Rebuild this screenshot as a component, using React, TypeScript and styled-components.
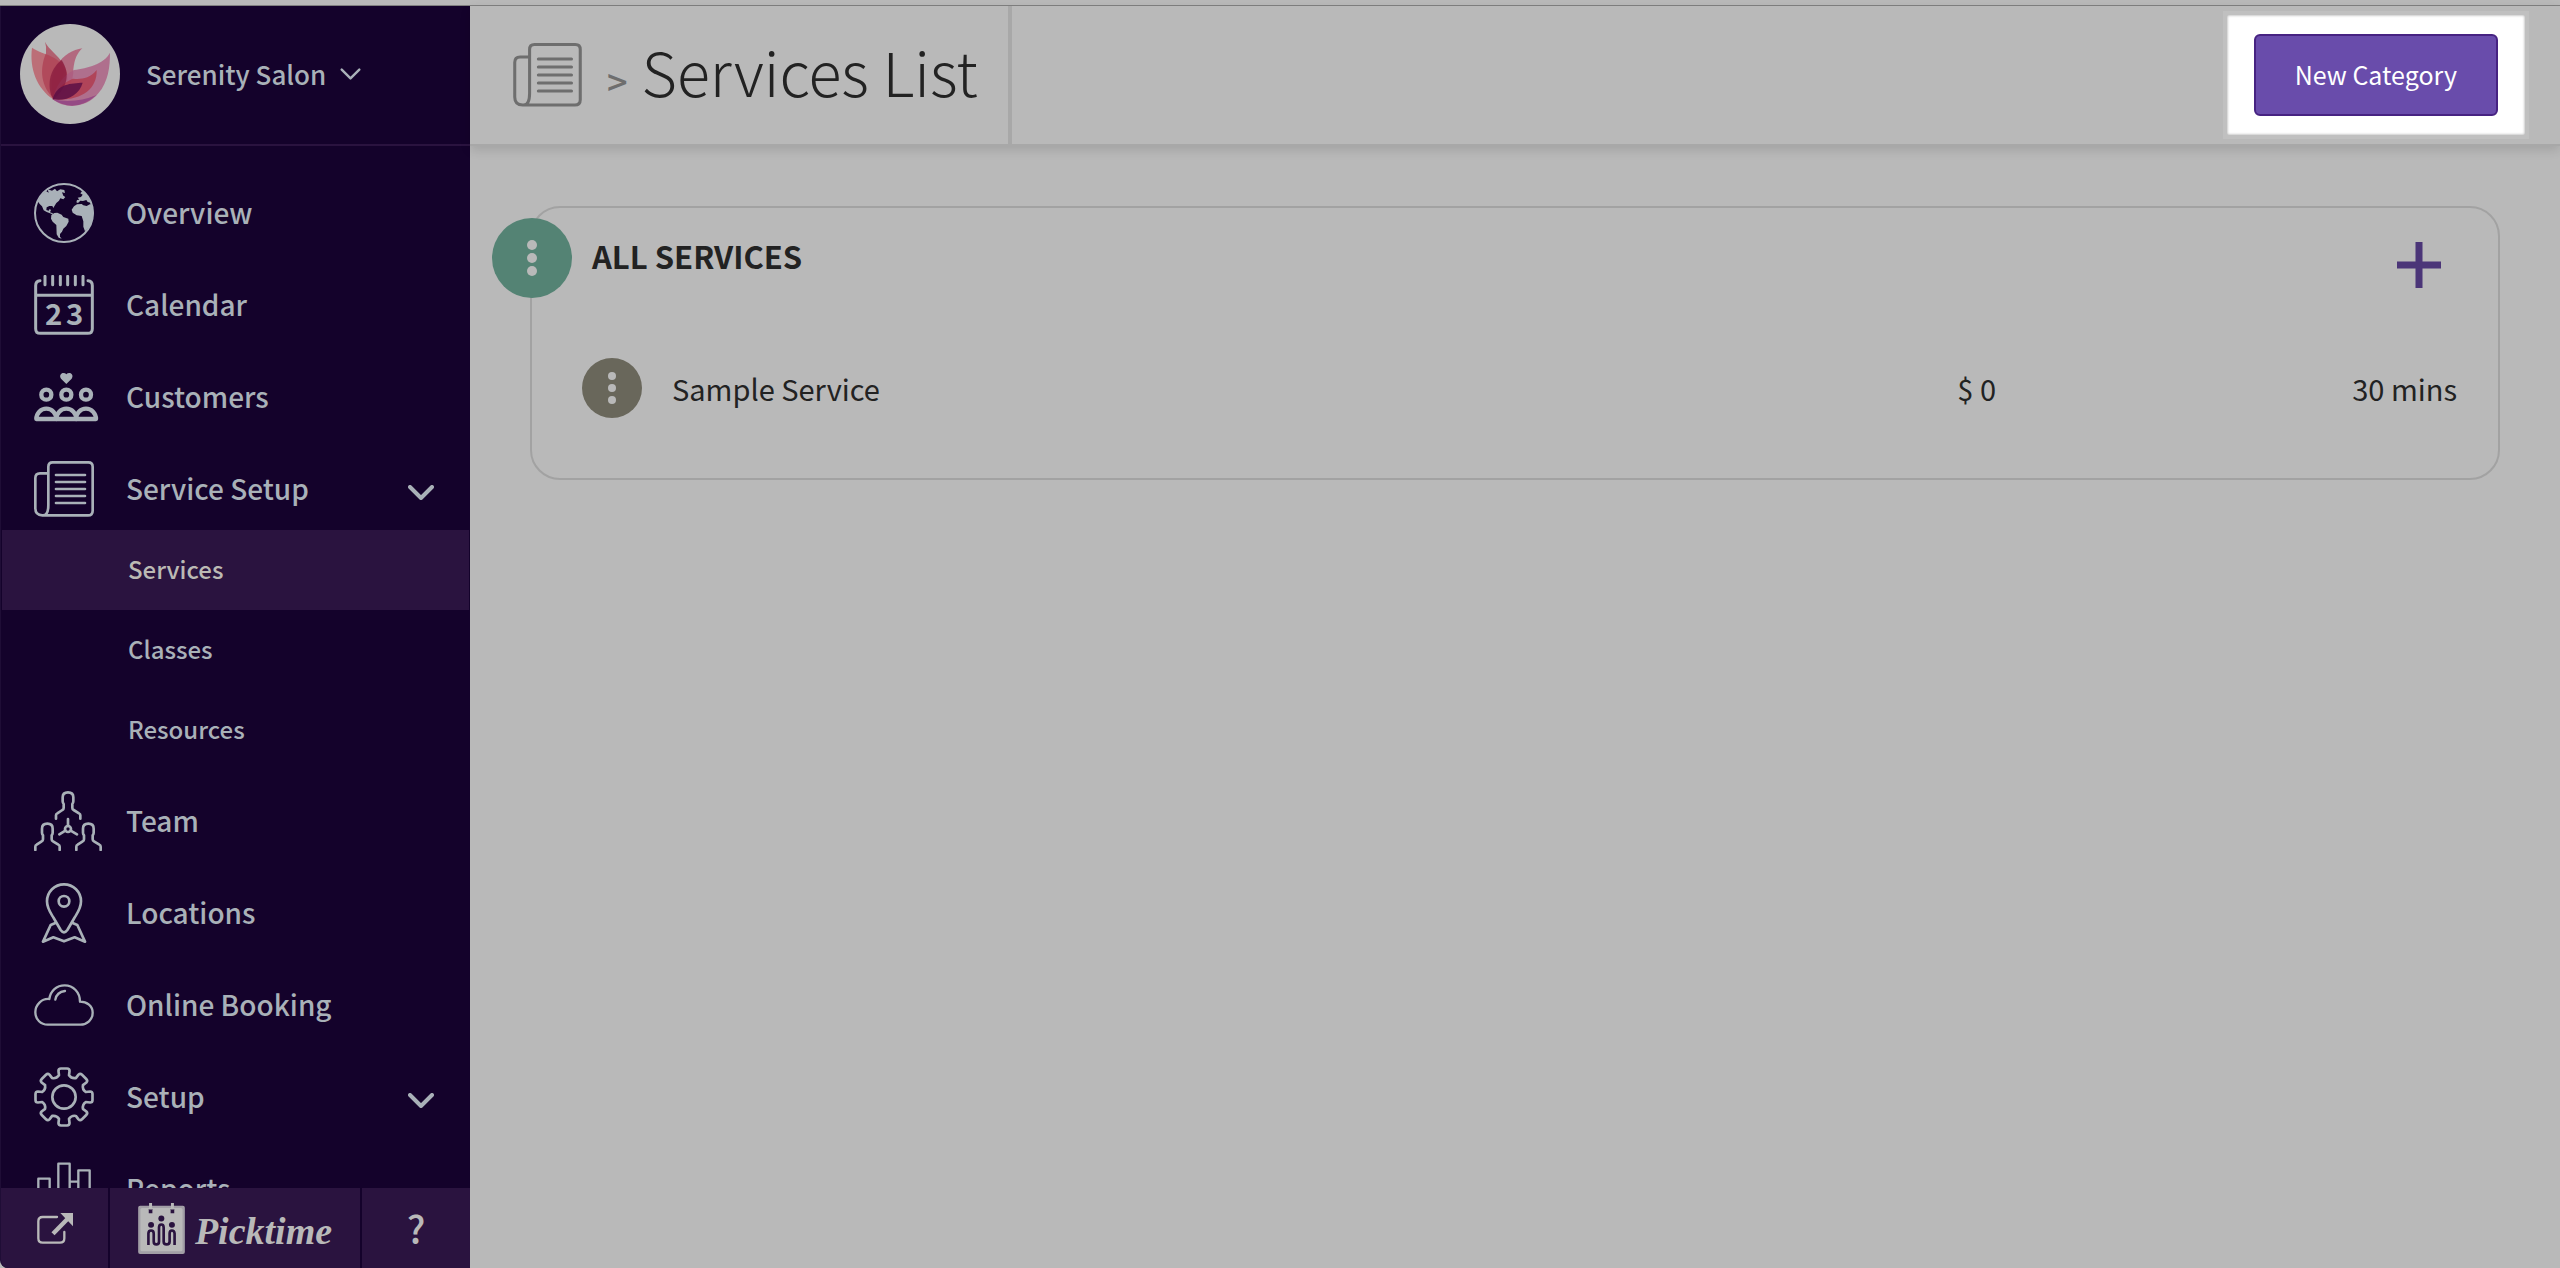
import React from "react";
import styled, { createGlobalStyle, css } from "styled-components";

const color = {
  page: "#b9b9b9",
  line: "#a8a8a8",
  sidebar: "#14022b",
  sidebarRaised: "#2a133f",
  navText: "#a9b1b8",
  text: "#222222",
  muted: "#6e6e6e",
  purple: "#694cab",
  purpleDark: "#472382",
};

const GlobalStyle = createGlobalStyle`
  *, *::before, *::after { box-sizing: border-box; }
  body {
    margin: 0;
    background: ${color.page};
    color: ${color.text};
    font-family: "Noto Sans CJK SC", "Noto Sans", sans-serif;
    font-size: 29px;
    line-height: 40px;
  }
  button { font: inherit; color: inherit; background: none; border: 0; padding: 0; cursor: pointer; }
  a { color: inherit; text-decoration: none; }
  ul { list-style: none; margin: 0; padding: 0; }
  svg { display: block; flex: none; }
`;

const Shell = styled.div`
  display: grid;
  grid-template-columns: 470px minmax(0, 1fr);
  grid-template-rows: 6px minmax(0, 1fr);
  height: 100vh;
`;

const TopStrip = styled.div`
  grid-column: 1 / -1;
  border-bottom: 1px solid #808080;
`;

/* ---------- sidebar ---------- */

const Sidebar = styled.aside`
  display: flex;
  flex-direction: column;
  min-height: 0;
  overflow: hidden;
  background: ${color.sidebar};
  color: ${color.navText};
  border-left: 1px solid #1f0d36;
  border-bottom-left-radius: 8px;
  font-weight: 500;
`;

const Profile = styled.button`
  flex: none;
  display: flex;
  align-items: center;
  height: 140px;
  padding: 0 19px 2px;
  border-bottom: 2px solid ${color.sidebarRaised};
  font-size: 26px;
  font-weight: 500;
`;

const ProfileName = styled.span`
  margin: 0 14px 0 26px;
`;

const Nav = styled.nav`
  flex: 1;
  min-height: 0;
  overflow: hidden;
  padding: 26px 1px 0;
`;

const NavList = styled.ul`
  display: grid;
  gap: 10px;
`;

const NavLink = styled.a`
  display: flex;
  align-items: center;
  height: 82px;
  padding: 0 35px 0 32px;
  font-size: 28px;
`;

const IconSlot = styled.span`
  flex: none;
  width: 92px;
`;

const NavLabel = styled.span`
  flex: 1;
  padding-bottom: 2px;
`;

const Expander = styled.span`
  padding-top: 6px;
`;

const SubLink = styled.a<{ $active?: boolean }>`
  display: flex;
  align-items: center;
  height: 80px;
  padding: 0 0 2px 126px;
  font-size: 24px;
  ${(p) =>
    p.$active &&
    css`
      background: ${color.sidebarRaised};
      color: #bbb9b4;
    `}
`;

const Footer = styled.footer`
  flex: none;
  display: grid;
  grid-template-columns: 107px 1fr 108px;
  gap: 2px;
  height: 80px;
  color: ${color.page};
`;

const FooterLink = styled.a<{ $large?: boolean }>`
  display: flex;
  align-items: center;
  justify-content: center;
  gap: 10px;
  background: ${color.sidebarRaised};
  font-size: ${(p) => (p.$large ? "38px" : "28px")};
`;

const Wordmark = styled.span`
  padding-top: 6px;
  font: italic bold 38px/48px "Liberation Serif", serif;
`;

/* ---------- main area ---------- */

const Main = styled.main`
  display: flex;
  flex-direction: column;
  min-width: 0;
`;

const Header = styled.header`
  display: flex;
  justify-content: space-between;
  height: 140px;
  border-bottom: 2px solid ${color.line};
  box-shadow: 0 4px 10px rgba(0, 0, 0, 0.12);
`;

const Crumbs = styled.div`
  display: flex;
  align-items: center;
  padding: 0 30px 0 43px;
  border-right: 4px solid ${color.line};
`;

const HeaderIcon = styled.span`
  color: ${color.muted};
`;

const Separator = styled.span`
  padding: 10px 14px 0 25px;
  color: ${color.muted};
  font-size: 36px;
  font-weight: 500;
`;

const Title = styled.h1`
  margin: 0;
  padding-bottom: 8px;
  font-size: 61px;
  line-height: 80px;
  font-weight: 300;
`;

const Spotlight = styled.div`
  align-self: flex-start;
  margin: 9px 35px 0 0;
  padding: 19px 27px;
  background: #ffffff;
  box-shadow: 0 0 0 4px #c0c0c0, inset 0 0 3px rgba(0, 0, 0, 0.4);
`;

const PrimaryButton = styled.button`
  display: block;
  height: 82px;
  padding: 0 39px 2px;
  border: 2px solid ${color.purpleDark};
  border-radius: 6px;
  background: ${color.purple};
  color: #ffffff;
  font-size: 25px;
`;

const Content = styled.div`
  padding: 60px;
`;

const Card = styled.section`
  padding: 10px 41px 60px 50px;
  border: 2px solid #a2a2a2;
  border-radius: 30px;
`;

const CardHeader = styled.div`
  display: flex;
  align-items: center;
  margin-left: -90px;
`;

const CardTitle = styled.h2`
  flex: 1;
  margin: 0;
  padding: 0 0 4px 20px;
  font-size: 31px;
  font-weight: 700;
`;

const MenuButton = styled.button<{ $size: number; $tone: string }>`
  display: grid;
  place-items: center;
  width: ${(p) => p.$size}px;
  height: ${(p) => p.$size}px;
  border-radius: 50%;
  background: ${(p) => p.$tone};
`;

const AddButton = styled.button`
  padding: 14px 16px 0 0;
`;

const ServiceRow = styled.li`
  display: grid;
  grid-template-columns: 60px 1fr auto 461px;
  align-items: center;
  margin-top: 60px;
`;

const ServiceName = styled.span`
  padding-left: 30px;
`;

const ServiceDuration = styled.span`
  text-align: right;
`;

/* ---------- icons ---------- */

type IconProps = { box: string; w: number; h: number; stroke?: number; children: React.ReactNode };

const Icon = ({ box, w, h, stroke = 8, children }: IconProps) => (
  <svg
    viewBox={box}
    width={w}
    height={h}
    fill="none"
    stroke="currentColor"
    strokeWidth={stroke}
    strokeLinecap="round"
    strokeLinejoin="round"
    aria-hidden="true"
  >
    {children}
  </svg>
);

const Chevron = ({ w, h, stroke = 3 }: { w: number; h: number; stroke?: number }) => (
  <Icon box="0 0 26 15" w={w} h={h} stroke={stroke}>
    <path d="M2 2 13 13 24 2" />
  </Icon>
);

const Globe = () => (
  <Icon box="102 549 180 180" w={60} h={60} stroke={6}>
    <circle cx="192" cy="639" r="87" />
    <g fill="currentColor" stroke="none">
      <path d="M113 604 122 588 138 573 146 578 143 568 156 572 165 566 171 574 181 568 193 570 195 579 186 577 190 587 196 591 190 598 181 595 177 602 169 609 163 619 160 624 157 618 148 618 140 622 139 630 146 632 149 627 153 630 150 637 158 640 160 644 150 640 140 636 131 631 126 619 119 612Z" />
      <path d="M154 645 163 639 172 638 185 644 190 651 205 656 206 665 199 678 190 686 186 695 180 702 180 710 185 716 176 713 170 703 169 675 158 665 153 656Z" />
      <path d="M222 619 231 613 245 612 250 616 260 618 271 612 278 620 281 640 277 663 268 682 255 694 250 680 250 664 245 648 230 646 218 638 215 629Z" />
      <path d="M229 607 231 600 238 599 233 593 243 591 248 584 241 580 247 573 258 580 268 596 272 608 263 606 259 600 249 603 241 602 234 609Z" />
    </g>
  </Icon>
);

const CalendarIcon = () => (
  <Icon box="102 45 180 180" w={60} h={60} stroke={9}>
    <path d="M120 62q-13 1-13 15V206q0 14 14 14H263q14 0 14-14V77q0-14-13-15M107 106H277" />
    <path d="M135 49V74M158 49V74M181 49V74M203 49V74M226 49V74M249 49V74" />
    <g fill="currentColor" stroke="none" fontSize="88" fontWeight="700" textAnchor="middle">
      <text x="161" y="196">2</text>
      <text x="224" y="196">3</text>
    </g>
  </Icon>
);

const CustomersIcon = () => (
  <Icon box="102 339 195 147" w={65} h={49} stroke={13}>
    <path
      d="M199 372 183 356C177 347 183 339 190 339q6 0 9 4q3-4 9-4C215 339 221 347 215 356Z"
      fill="currentColor"
      stroke="none"
    />
    {[139, 199, 258].map((x) => (
      <g key={x}>
        <circle cx={x} cy="404" r="15" />
        <path d={`M${x - 30} 477A30 31 0 0 1 ${x + 30} 477Z`} />
      </g>
    ))}
  </Icon>
);

const ServiceIcon = ({ w = 60, h = 56 }: { w?: number; h?: number }) => (
  <Icon box="102 603 180 168" w={w} h={h} stroke={8}>
    <path d="M145 640H120q-14 0-14 14V745q0 21 21 21H264q14 0 14-14V620q0-13-13-13H158q-13 0-13 13V735q0 31-16 31" />
    <path d="M168 645H255M168 666H255M168 687H255M168 708H255M168 729H255" />
  </Icon>
);

const person =
  "M168 176v-10q0-4 4-6l15-10q4-2 4-6V132q-3-4-3-8V112q0-15 16-15t16 15v12q0 4-3 8v12q0 4 4 6l16 10q4 2 4 6v10";

const TeamIcon = () => (
  <Icon box="102 93 204 180" w={68} h={60} stroke={8}>
    <path d={person} />
    <path d={person} transform="translate(-62 94)" />
    <path d={person} transform="translate(61 94)" />
    <circle cx="204" cy="207" r="9" />
    <path d="M204 177V198M196 212 178 223M212 212 231 223" />
  </Icon>
);

const PinIcon = () => (
  <Icon box="102 369 180 180" w={60} h={60} stroke={8}>
    <path d="M192 373a51 51 0 0 1 51 51c0 22-12 37-20 50L202 510q-10 14-20 0L161 474c-8-13-20-28-20-50a51 51 0 0 1 51-51Z" />
    <circle cx="192" cy="424" r="16" />
    <path d="M166 489 152 495 129 545 160 532 192 544 224 532 255 545 232 495 218 489" />
  </Icon>
);

const CloudIcon = () => (
  <Icon box="102 672 180 126" w={60} h={42} stroke={7}>
    <path d="M148 717C125 715 106 734 106 757c0 22 17 37 37 37H241c20 0 37-15 37-36c0-20-17-33-38-33c0-28-20-49-46-49c-24 0-43 16-46 41Z" />
    <path d="M166 719q4-23 29-26" />
  </Icon>
);

const polar = (r: number, deg: number) => {
  const a = (deg * Math.PI) / 180;
  return `${(r * Math.cos(a)).toFixed(1)} ${(r * Math.sin(a)).toFixed(1)}`;
};

const gearPath =
  Array.from({ length: 8 }, (_, i) => {
    const a = i * 45;
    return `${i ? "L" : "M"}${polar(67, a - 13)}L${polar(80, a - 12)}Q${polar(87, a - 11)} ${polar(86, a - 6)}L${polar(86, a + 6)}Q${polar(87, a + 11)} ${polar(80, a + 12)}L${polar(67, a + 13)}Q${polar(59, a + 22)} ${polar(67, a + 32)}`;
  }).join("") + "Z";

const GearIcon = () => (
  <Icon box="-90 -90 180 180" w={60} h={60} stroke={8}>
    <path d={gearPath} />
    <circle r="35" />
  </Icon>
);

const ReportsIcon = () => (
  <Icon box="102 447 180 180" w={60} h={60} stroke={7}>
    <path d="M115 612V506H149V612M175 612V461H209V612M235 612V481H269V612M209 515H235M106 612H278" />
  </Icon>
);

const ExternalIcon = () => (
  <Icon box="108 605 108 93" w={36} h={31} stroke={7}>
    <path d="M168 617H125q-13 0-13 13v51q0 13 13 13H177q13 0 13-13V662" />
    <path d="M156 667 200 622" strokeWidth="13" strokeLinecap="butt" />
    <path d="M178 605H216V645Z" fill="currentColor" stroke="none" />
  </Icon>
);

const PicktimeMark = () => (
  <svg viewBox="414 584 141 154" width={47} height={51} aria-hidden="true">
    <rect x="414" y="592" width="141" height="146" rx="6" fill="#a29fa6" />
    <rect x="421" y="599" width="127" height="131" rx="5" fill="#b9b9b9" />
    <path d="M446 602H457V615H446ZM512 602H523V615H512Z" fill="#2a133f" />
    <path d="M447 584H456V604H447ZM513 584H522V604H513Z" fill="#b9b9b9" />
    <g fill="#2a133f">
      <circle cx="453" cy="650" r="9" />
      <circle cx="484" cy="631" r="9" />
      <circle cx="516" cy="650" r="9" />
    </g>
    <path
      d="M445 711V676q0-9 8-9t8 9V700q0 9 8 9t8-9V658q0-9 7-9t7 9V700q0 9 9 9t9-9V676q0-9 7-9t8 9V711"
      fill="none"
      stroke="#2a133f"
      strokeWidth="8"
    />
  </svg>
);

const LotusAvatar = () => (
  <svg viewBox="60 72 300 300" width={100} height={100} aria-hidden="true">
    <circle cx="210" cy="222" r="150" fill="#b9b9b9" />
    <path d="M96 143C135 168 182 165 195 215L160 298C110 265 88 205 96 143Z" fill="#bd6670" opacity=".9" />
    <path d="M247 145C190 152 135 215 162 298C205 280 222 240 220 208C223 178 232 158 247 145Z" fill="#b04f6c" opacity=".75" />
    <path d="M135 125C150 158 205 180 203 240L163 298C112 250 125 190 138 160Q140 140 135 125Z" fill="#ad3a50" opacity=".7" />
    <path d="M330 158C312 192 262 205 222 210C190 225 165 262 158 298C195 328 260 325 295 280C325 245 330 200 330 158Z" fill="#ad5c82" opacity=".8" />
    <path d="M290 210C268 238 240 238 218 236C190 248 168 270 158 298C240 305 292 270 290 210Z" fill="#b03a4c" opacity=".8" />
    <path d="M185 180C145 210 140 265 160 298C205 260 210 220 185 180Z" fill="#86183c" opacity=".7" />
    <path d="M158 298C170 250 215 250 248 248C238 285 200 305 158 298Z" fill="#5c0f45" opacity=".85" />
    <path d="M158 298Q225 312 290 285Q225 342 158 298Z" fill="#8a3a82" opacity=".7" />
  </svg>
);

const Dots = ({ r, gap }: { r: number; gap: number }) => (
  <svg width={r * 2} height={gap * 2 + r * 2} fill="#b9b9b9" aria-hidden="true">
    {[0, 1, 2].map((i) => (
      <circle key={i} cx={r} cy={r + i * gap} r={r} />
    ))}
  </svg>
);

const PlusIcon = () => (
  <svg width="44" height="46" viewBox="0 0 44 46" stroke="#4b3578" strokeWidth="7" aria-hidden="true">
    <path d="M22 0V46M0 23H44" />
  </svg>
);

/* ---------- data ---------- */

type Item = { label: string; icon: React.ReactNode; expandable?: boolean; children?: string[] };

const items: Item[] = [
  { label: "Overview", icon: <Globe /> },
  { label: "Calendar", icon: <CalendarIcon /> },
  { label: "Customers", icon: <CustomersIcon /> },
  {
    label: "Service Setup",
    icon: <ServiceIcon />,
    expandable: true,
    children: ["Services", "Classes", "Resources"],
  },
  { label: "Team", icon: <TeamIcon /> },
  { label: "Locations", icon: <PinIcon /> },
  { label: "Online Booking", icon: <CloudIcon /> },
  { label: "Setup", icon: <GearIcon />, expandable: true },
  { label: "Reports", icon: <ReportsIcon /> },
];

const services = [{ name: "Sample Service", price: "$ 0", duration: "30 mins" }];

export default function App() {
  return (
    <>
      <GlobalStyle />
      <Shell>
        <TopStrip />
        <Sidebar>
          <Profile type="button">
            <LotusAvatar />
            <ProfileName>Serenity Salon</ProfileName>
            <Chevron w={21} h={12} />
          </Profile>
          <Nav aria-label="Main">
            <NavList>
              {items.map((item) => (
                <li key={item.label}>
                  <NavLink href="#">
                    <IconSlot>{item.icon}</IconSlot>
                    <NavLabel>{item.label}</NavLabel>
                    {item.expandable && (
                      <Expander>
                        <Chevron w={26} h={15} stroke={4} />
                      </Expander>
                    )}
                  </NavLink>
                  {item.children && (
                    <ul>
                      {item.children.map((child) => (
                        <li key={child}>
                          <SubLink href="#" $active={child === "Services"}>
                            {child}
                          </SubLink>
                        </li>
                      ))}
                    </ul>
                  )}
                </li>
              ))}
            </NavList>
          </Nav>
          <Footer>
            <FooterLink href="#" aria-label="Open booking page">
              <ExternalIcon />
            </FooterLink>
            <FooterLink href="#">
              <PicktimeMark />
              <Wordmark>Picktime</Wordmark>
            </FooterLink>
            <FooterLink href="#" $large>
              ?
            </FooterLink>
          </Footer>
        </Sidebar>
        <Main>
          <Header>
            <Crumbs>
              <HeaderIcon>
                <ServiceIcon w={69} h={64} />
              </HeaderIcon>
              <Separator>&gt;</Separator>
              <Title>Services List</Title>
            </Crumbs>
            <Spotlight>
              <PrimaryButton type="button">New Category</PrimaryButton>
            </Spotlight>
          </Header>
          <Content>
            <Card>
              <CardHeader>
                <MenuButton type="button" $size={80} $tone="#548374" aria-label="Category options">
                  <Dots r={5} gap={13} />
                </MenuButton>
                <CardTitle>ALL SERVICES</CardTitle>
                <AddButton type="button" aria-label="Add service">
                  <PlusIcon />
                </AddButton>
              </CardHeader>
              <ul>
                {services.map((s) => (
                  <ServiceRow key={s.name}>
                    <MenuButton type="button" $size={60} $tone="#69675b" aria-label="Service options">
                      <Dots r={4} gap={12} />
                    </MenuButton>
                    <ServiceName>{s.name}</ServiceName>
                    <span>{s.price}</span>
                    <ServiceDuration>{s.duration}</ServiceDuration>
                  </ServiceRow>
                ))}
              </ul>
            </Card>
          </Content>
        </Main>
      </Shell>
    </>
  );
}
